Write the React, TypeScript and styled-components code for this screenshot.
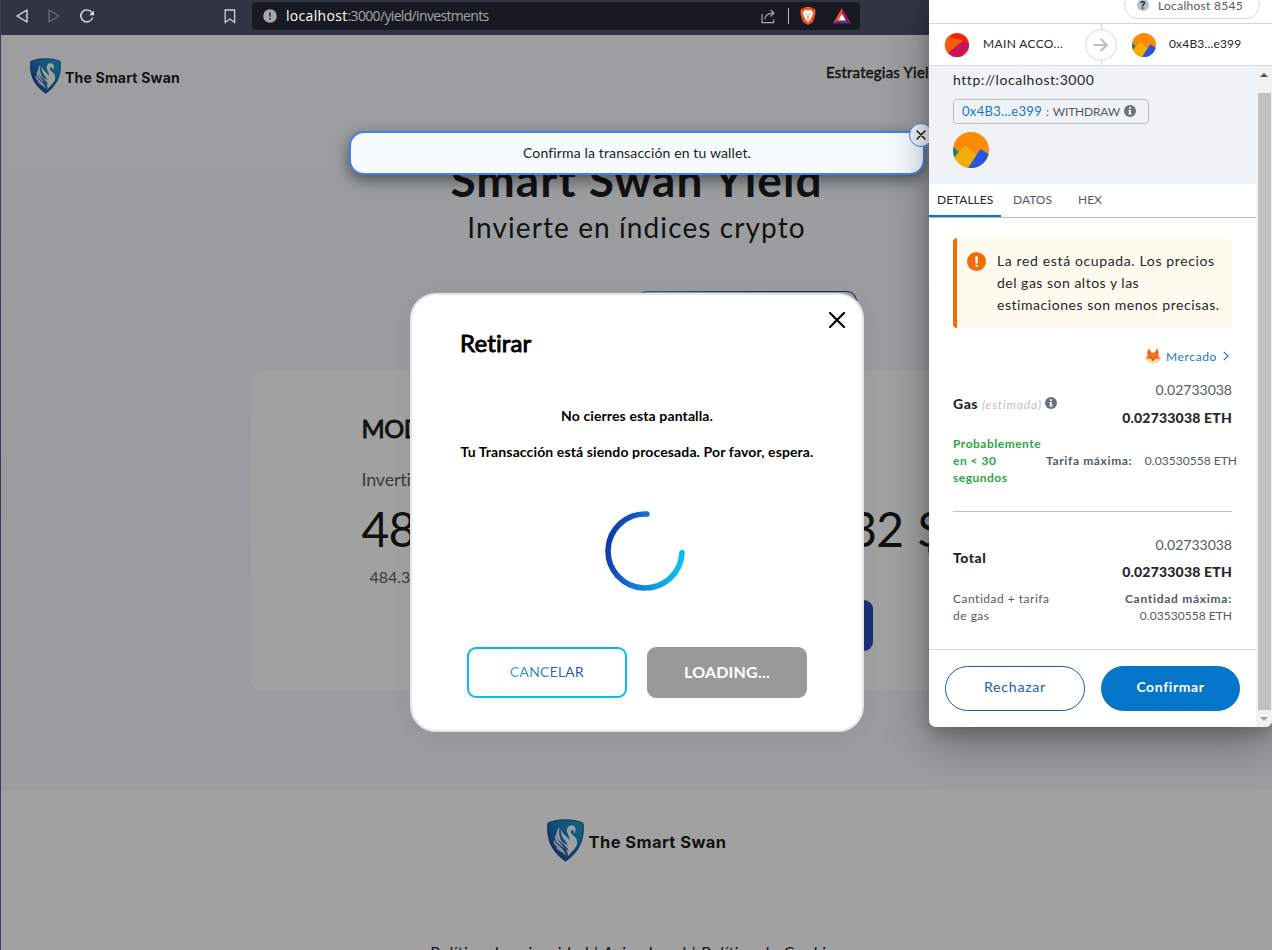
import React from 'react';
import styled, { createGlobalStyle } from 'styled-components';

const GlobalStyle = createGlobalStyle`
  *, *::before, *::after { box-sizing: border-box; }
  body { margin: 0; font-family: Lato, sans-serif; color: #1b1b1b; }
  svg { display: block; flex: none; }
  button { font: inherit; padding: 0; cursor: pointer; }
`;

const Screen = styled.div`
  position: relative;
  width: 1272px;
  height: 950px;
  overflow: hidden;
  display: flex;
  flex-direction: column;
  border-left: 1px solid #4a3558;
  background: #fff;
`;

/* ---------- browser toolbar ---------- */

const Toolbar = styled.div`
  flex: none;
  height: 35px;
  padding: 0 0 3px 15px;
  display: flex;
  align-items: center;
  background: #313443;
`;

const NavIcons = styled.div`
  display: flex;
  align-items: center;
  gap: 20px;
  width: 208px;
`;

const AddressBar = styled.div`
  width: 608px;
  height: 28px;
  margin-left: 16px;
  padding: 0 9px 0 11px;
  display: flex;
  align-items: center;
  border-radius: 4px;
  background: #171a22;
  font: 14px/28px 'Open Sans', sans-serif;
`;

const UrlHost = styled.span`
  margin-left: 9px;
  color: #fff;
  letter-spacing: 0.32px;
`;

const UrlPath = styled.span`
  flex: 1;
  color: #a3a5ad;
  letter-spacing: -0.66px;
`;

const AddressDivider = styled.i`
  width: 1px;
  height: 16px;
  margin: 0 11px 0 12px;
  background: #b9bac0;
`;

const Spacer = styled.i`
  width: 17px;
`;

/* ---------- site ---------- */

const Site = styled.div`
  position: relative;
  flex: 1;
  min-height: 0;
  overflow: hidden;
`;

const Hero = styled.section`
  height: 755px;
  display: flex;
  flex-direction: column;
  align-items: center;
  background: linear-gradient(180deg, #fafbfe 0%, #f8f9fc 25%, #f3f6fa 60%, #f8f9fc 100%);
`;

const SiteHeader = styled.header`
  align-self: stretch;
  height: 83px;
  padding: 0 0 1px 29px;
  display: flex;
  align-items: center;
`;

const Brand = styled.div<{ $large?: boolean }>`
  display: flex;
  align-items: center;
  gap: ${(p) => (p.$large ? 5 : 4)}px;
  width: ${(p) => (p.$large ? 'auto' : '796px')};
  font: 700 ${(p) => (p.$large ? 16.5 : 14)}px/20px Inter, sans-serif;
  letter-spacing: ${(p) => (p.$large ? 0.42 : 0.2)}px;
  color: #1c1c1e;
`;

const BrandName = styled.span`
  padding-top: 3px;
`;

const NavLink = styled.a`
  margin-top: -8px;
  font-size: 15px;
  letter-spacing: 0.21px;
  color: #222;
  -webkit-text-stroke: 0.45px #222;
`;

const HeroTitle = styled.h1`
  margin: 37px 0 0;
  height: 50px;
  font: 700 46px/50px Lato, sans-serif;
  letter-spacing: 1.05px;
  color: #1d1d1d;
`;

const HeroSubtitle = styled.p`
  margin: 2px 0 0;
  height: 40px;
  font: 400 28px/40px Lato, sans-serif;
  letter-spacing: 1.1px;
  color: #1d1d1d;
`;

const RangeButton = styled.div`
  width: 220px;
  height: 44px;
  margin: 44px 0 0 221px;
  border: 1px solid transparent;
  border-radius: 10px;
  background:
    linear-gradient(#f9fafd, #f9fafd) padding-box,
    linear-gradient(90deg, #23a8d8, #2444b4 60%) border-box;
`;

const StrategyCard = styled.article`
  width: 772px;
  height: 320px;
  margin-top: 36px;
  padding: 41px 150px 40px 111px;
  border-radius: 10px;
  background: #fff;
  display: grid;
  grid-template-columns: 396px minmax(0, 1fr);
  align-content: start;
`;

const CardTitle = styled.h2`
  grid-column: 1 / -1;
  margin: 0;
  font: 400 25px/32px Lato, sans-serif;
  letter-spacing: -0.5px;
  color: #1d1d1d;
  -webkit-text-stroke: 0.9px #1d1d1d;
`;

const CardLabel = styled.span`
  margin-top: 24px;
  height: 22px;
  font-size: 18px;
  line-height: 22px;
  letter-spacing: -0.2px;
  color: #606060;
`;

const CardAmount = styled.strong`
  margin-top: 10px;
  height: 58px;
  font-size: 48px;
  font-weight: 400;
  line-height: 58px;
  letter-spacing: -0.8px;
  word-spacing: 2px;
  white-space: nowrap;
  color: #1a1a1a;
`;

const CardUnits = styled.span`
  margin: 9px 0 0 8px;
  height: 20px;
  font-size: 16px;
  line-height: 20px;
  color: #606060;
`;

const CardAction = styled.div`
  grid-column: 1 / -1;
  justify-self: end;
  width: 160px;
  height: 51px;
  margin-top: 13px;
  border-radius: 9px;
  background: linear-gradient(90deg, #1fb0e0, #2c4bbb 80%);
`;

const SiteFooter = styled.footer`
  display: flex;
  flex-direction: column;
  align-items: center;
  padding-top: 29px;
  background: #fff;
`;

const FooterLinks = styled.p`
  margin: 78px 0 0;
  font-size: 16px;
  line-height: 24px;
  letter-spacing: 0.4px;
  word-spacing: 0.6px;
  white-space: nowrap;
  color: #1d1d1d;
`;

const Backdrop = styled.div`
  position: absolute;
  inset: 0;
  background: rgba(0, 0, 0, 0.37);
`;

/* ---------- toast ---------- */

const Toast = styled.div`
  position: absolute;
  left: 348px;
  top: 131px;
  width: 576px;
  height: 44px;
  padding-bottom: 1px;
  display: flex;
  align-items: center;
  justify-content: center;
  border: 2px solid #3f82ee;
  border-radius: 15px;
  background: #f5fbff;
  box-shadow: 0 5px 15px rgba(0, 0, 0, 0.5);
  font-size: 14px;
  letter-spacing: 0.14px;
  color: #222;
`;

const ToastClose = styled.button`
  position: absolute;
  right: -10px;
  top: -10px;
  width: 24px;
  height: 24px;
  display: grid;
  place-items: center;
  border: 1px solid #3f82ee;
  border-radius: 50%;
  background: #f2f7ff;
`;

/* ---------- modal ---------- */

const Modal = styled.div`
  position: absolute;
  left: 409px;
  top: 293px;
  width: 454px;
  height: 439px;
  padding: 33px 48px 0;
  display: flex;
  flex-direction: column;
  border: 2px solid #e3e5ea;
  border-radius: 26px;
  background: #fff;
  box-shadow: 0 4px 20px rgba(0, 0, 0, 0.06);
  color: #000;
`;

const ModalClose = styled.button`
  position: absolute;
  right: 17px;
  top: 17px;
  border: 0;
  background: none;
`;

const ModalTitle = styled.h2`
  margin: 0;
  font: 400 24px/30px Lato, sans-serif;
  letter-spacing: 0.15px;
  -webkit-text-stroke: 0.9px #000;
`;

const ModalText = styled.p<{ $gap: number }>`
  margin: ${(p) => p.$gap}px 0 0;
  font-size: 14px;
  font-weight: 700;
  line-height: 18px;
  letter-spacing: 0.12px;
  text-align: center;
  white-space: nowrap;
`;

const SpinnerBox = styled.div`
  margin: 50px 0 0 145px;
`;

const ModalActions = styled.div`
  display: flex;
  justify-content: center;
  gap: 20px;
  margin-top: 56px;
`;

const ModalButton = styled.button<{ $muted?: boolean }>`
  width: 160px;
  height: 51px;
  padding-bottom: 2px;
  border: ${(p) => (p.$muted ? 0 : '2px solid #0bbce9')};
  border-radius: 9px;
  background: ${(p) => (p.$muted ? '#999' : '#fff')};
  color: #fff;
  font-size: ${(p) => (p.$muted ? 16 : 14)}px;
  font-weight: ${(p) => (p.$muted ? 700 : 400)};
  letter-spacing: 0.2px;
`;

const GradientLabel = styled.span`
  background: linear-gradient(90deg, #2aa0dd, #1b48b4);
  -webkit-background-clip: text;
  background-clip: text;
  color: transparent;
`;

/* ---------- wallet popup ---------- */

const Wallet = styled.aside`
  position: absolute;
  right: 0;
  top: 0;
  width: 343px;
  height: 727px;
  display: flex;
  flex-direction: column;
  overflow: hidden;
  border-radius: 0 0 7px 7px;
  background: #fff;
  font-size: 12px;
  color: #24272a;
`;

const WalletShadow = styled.div`
  position: absolute;
  right: 0;
  top: 0;
  width: 343px;
  height: 727px;
  border-radius: 0 0 7px 7px;
  box-shadow: 0 6px 14px rgba(0, 0, 0, 0.14), 0 14px 44px rgba(0, 0, 0, 0.36);
`;

const NetworkBar = styled.div`
  flex: none;
  height: 24px;
  padding: 0 12px 4px 0;
  display: flex;
  justify-content: flex-end;
  align-items: flex-end;
  border-bottom: 1px solid #d6d9dc;
`;

const NetworkPill = styled.div`
  flex: none;
  width: 136px;
  height: 28px;
  padding: 0 0 0 12px;
  display: flex;
  align-items: center;
  gap: 9px;
  border: 1px solid #d6d9dc;
  border-radius: 14px;
  color: #535a61;
  letter-spacing: 0.29px;
`;

const Bullet = styled.span`
  width: 12px;
  height: 12px;
  border-radius: 50%;
  background: #bbc0c5;
  color: #24272a;
  font: 700 10px/12px Inter, sans-serif;
  text-align: center;
`;

const AccountsBar = styled.div`
  flex: none;
  height: 42px;
  display: grid;
  grid-template-columns: 38px 102px 32px 15px 37px 1fr;
  align-items: center;
  padding-left: 16px;
  border-bottom: 1px solid #d6d9dc;
`;

const AccountName = styled.span<{ $spacing: number }>`
  padding-bottom: 2px;
  letter-spacing: ${(p) => p.$spacing}px;
  white-space: nowrap;
`;

const ArrowColumn = styled.div`
  align-self: stretch;
  display: flex;
  flex-direction: column;
  align-items: center;
  background: linear-gradient(#d6d9dc, #d6d9dc) center / 1px 100% no-repeat;
  padding-top: 5px;
`;

const ArrowCircle = styled.div`
  width: 32px;
  height: 32px;
  flex: none;
  display: grid;
  place-items: center;
  border: 1px solid #d6d9dc;
  border-radius: 50%;
  background: #fff;
`;

const WalletBody = styled.div`
  flex: 1;
  min-height: 0;
  display: flex;
`;

const WalletContent = styled.div`
  width: 327px;
  display: flex;
  flex-direction: column;
`;

const Scrollbar = styled.div`
  width: 16px;
  display: grid;
  grid-template-rows: 27px 1fr 17px;
  justify-items: center;
  background: #f1f1f1;
`;

const ScrollArrow = styled.div<{ $down?: boolean }>`
  align-self: ${(p) => (p.$down ? 'center' : 'start')};
  margin-top: ${(p) => (p.$down ? 0 : 7)}px;
  border: 4px solid transparent;
  border-top-width: ${(p) => (p.$down ? 4 : 0)}px;
  border-bottom-width: ${(p) => (p.$down ? 0 : 4)}px;
  border-${(p) => (p.$down ? 'top' : 'bottom')}-color: ${(p) => (p.$down ? '#a0a0a0' : '#505050')};
`;

const ScrollThumb = styled.div`
  width: 13px;
  background: #c1c1c1;
  margin-left: 1px;
`;

const Summary = styled.div`
  flex: none;
  height: 118px;
  padding: 4px 24px 0;
  background: #eff3f6;
`;

const Origin = styled.div`
  font-size: 14px;
  line-height: 20px;
  letter-spacing: 0.56px;
`;

const MethodChip = styled.div`
  width: 196px;
  height: 25px;
  margin: 9px 0 8px;
  padding: 0 0 1px 8px;
  display: flex;
  align-items: center;
  border: 1px solid #bbc0c5;
  border-radius: 4px;
  color: #535a61;
  letter-spacing: -0.2px;
`;

const AddressLink = styled.span`
  margin-right: 4px;
  font-size: 13px;
  letter-spacing: 0.32px;
  color: #1277cc;
`;

const MethodName = styled.span`
  margin: 0 4px;
`;

const Tabs = styled.div`
  flex: none;
  height: 34px;
  display: flex;
  gap: 4px;
  border-bottom: 1px solid #bbc0c5;
`;

const Tab = styled.div<{ $active?: boolean; $width: number }>`
  width: ${(p) => p.$width}px;
  height: 33px;
  padding: 8px 0 0 8px;
  line-height: 16px;
  color: ${(p) => (p.$active ? '#24272a' : '#535a61')};
  border-bottom: ${(p) => (p.$active ? '2px solid #0376c9' : '0')};
`;

const Alert = styled.div`
  flex: none;
  width: 279px;
  height: 90px;
  margin: 20px 0 0 24px;
  padding: 12px 0 0 10px;
  display: flex;
  gap: 11px;
  border-left: 4px solid #f66a0a;
  border-radius: 4px;
  background: #fefaee;
`;

const AlertMark = styled.span`
  width: 19px;
  height: 19px;
  margin-top: 2px;
  border-radius: 50%;
  background: #f66a0a;
  color: #fff;
  font: 700 14px/19px Inter, sans-serif;
  text-align: center;
`;

const AlertText = styled.p`
  margin: 0;
  font-size: 14px;
  line-height: 22px;
`;

const AlertLine = styled.span<{ $spacing: number }>`
  display: block;
  letter-spacing: ${(p) => p.$spacing}px;
  white-space: nowrap;
`;

const GasSource = styled.div`
  height: 16px;
  margin: 20px 27px 0 0;
  display: flex;
  align-items: center;
  justify-content: flex-end;
  color: #1277cc;
  letter-spacing: 0.62px;
`;

const GasSourceName = styled.span`
  margin: 0 6px 0 5px;
`;

const FeeBlock = styled.section<{ $gap: number; $height: number }>`
  height: ${(p) => p.$height}px;
  margin: ${(p) => p.$gap}px 24px 0;
`;

const FeeHead = styled.div`
  display: flex;
  align-items: center;
  justify-content: space-between;
`;

const FeeName = styled.div`
  display: flex;
  align-items: baseline;
  margin-top: -2px;
  font-size: 14px;
  font-weight: 900;
  letter-spacing: 0.5px;
`;

const FeeHint = styled.em`
  margin: 0 3px 0 4px;
  font-size: 12px;
  font-weight: 400;
  letter-spacing: 0.85px;
  color: #bbc0c5;
`;

const InfoSlot = styled.span`
  align-self: center;
`;

const FeeAmounts = styled.div<{ $step: number }>`
  text-align: right;
  font-size: 14px;
  line-height: ${(p) => p.$step}px;
  color: #535a61;
`;

const FeeTotal = styled.strong`
  display: block;
  font-weight: 900;
  letter-spacing: 0.2px;
  color: #24272a;
`;

const FeeFoot = styled.div<{ $gap: number }>`
  display: flex;
  align-items: center;
  justify-content: space-between;
  margin-top: ${(p) => p.$gap}px;
  line-height: 17px;
  letter-spacing: 0.5px;
  color: #535a61;
  white-space: nowrap;
`;

const FeeTiming = styled.strong`
  width: 93px;
  color: #28a745;
  line-height: 17px;
  white-space: pre-line;
`;

const MaxFee = styled.div`
  flex: 1;
  display: flex;
  justify-content: space-between;
  margin-right: -5px;
`;

const MaxLabel = styled.strong<{ $wide?: boolean }>`
  letter-spacing: ${(p) => (p.$wide ? 0.72 : 0.63)}px;
`;

const MaxValue = styled.span`
  letter-spacing: 0.03px;
`;

const Stack = styled.div<{ $right?: boolean }>`
  display: flex;
  flex-direction: column;
  align-items: ${(p) => (p.$right ? 'flex-end' : 'flex-start')};
`;

const Divider = styled.hr`
  width: 279px;
  margin: 0 0 0 24px;
  border: 0;
  border-top: 1px solid #bbc0c5;
`;

const WalletActions = styled.div`
  margin-top: auto;
  height: 78px;
  padding: 16px;
  display: grid;
  grid-template-columns: 140px 139px;
  gap: 16px;
  border-top: 1px solid #d6d9dc;
`;

const WalletButton = styled.button<{ $primary?: boolean }>`
  height: 45px;
  padding-bottom: 4px;
  border: 1px solid ${(p) => (p.$primary ? '#0376c9' : '#1660a8')};
  border-radius: 23px;
  background: ${(p) => (p.$primary ? '#0376c9' : '#fff')};
  color: ${(p) => (p.$primary ? '#fff' : '#1660a8')};
  font-size: 14px;
  font-weight: ${(p) => (p.$primary ? 700 : 400)};
  letter-spacing: ${(p) => (p.$primary ? 0.6 : 0.81)}px;
`;

/* ---------- drawings ---------- */

function SwanShield({ width, height, id }: { width: number; height: number; id: string }) {
  return (
    <svg width={width} height={height} viewBox="0 0 37 43">
      <defs>
        <linearGradient id={id} x1="0.85" y1="0.1" x2="0.15" y2="0.8">
          <stop offset="0" stopColor="#1f9dc8" />
          <stop offset="0.45" stopColor="#1d7fc0" />
          <stop offset="1" stopColor="#2846a4" />
        </linearGradient>
      </defs>
      <path d="M18.5 0.3C25 0.3 31 1.2 35.4 3.3C36.4 3.8 36.8 4.6 36.8 5.8C37.2 20 34.5 31 18.7 42.7C2.5 31 -0.1 20 0.2 5.8C0.2 4.6 0.6 3.8 1.6 3.3C6 1.2 12 0.3 18.5 0.3Z" fill={`url(#${id})`} />
      <path d="M0.9 5.8C0.9 4.8 1.2 4.3 2 3.9C6.5 1.8 12 1 18.5 1C25 1 30.5 1.8 35 3.9C35.8 4.3 36.1 4.8 36.1 5.8C36.5 20 33.5 30.8 18.7 41.8C3.5 30.8 0.5 20 0.9 5.8Z" fill="none" stroke="#233a8c" strokeWidth="1" opacity="0.7" />
      <path d="M20.3 13.5C19.2 9.5 21.2 6.4 24.2 6.4C26.8 6.4 28.8 8 28.6 10.2C28.5 11.6 27.9 13.1 27.9 14.6C26.9 13.9 27.1 12 25.9 11.2C24.6 10.5 23.3 11.8 23.7 13.5C24.3 16.2 30.1 17.6 30.1 23C30.1 29.5 24.8 31.5 20.8 37.6C21.2 34.6 20.6 32.5 18.4 30.3C20.2 30.8 21.2 31.8 21.7 33C21.7 28.5 17.5 27.5 14.6 22.5C17 24.4 19.2 25.2 20.9 26.9C19.8 22 12.5 18.5 14.3 10.3C15.3 15.5 20.6 18 22.7 21.4C23.2 18.5 21.1 16.6 20.3 13.5Z" fill="#fff" />
      <path d="M12.2 9C7.8 14.5 10.2 19.7 15.2 24.1C12.8 19.5 10.8 15.5 12.2 9ZM9.4 15.5C6.3 20.3 10.5 24.2 16.4 28.4C12.8 24.2 9.3 20.6 9.4 15.5ZM7.2 21.3C6.3 26.6 12 28.2 17.4 33.6C14.8 27.8 8.8 26.6 7.2 21.3ZM9.6 28.3C10.5 31.5 15.2 31.6 18.7 36.2C17.6 32.2 12.8 31.4 9.6 28.3Z" fill="#fff" stroke="#fff" strokeWidth="0.5" />
    </svg>
  );
}

function Cross({ size, weight }: { size: number; weight: number }) {
  return (
    <svg width={size} height={size} viewBox={`0 0 ${size} ${size}`} stroke="#000" strokeWidth={weight} strokeLinecap="round">
      <path d={`M1 1L${size - 1} ${size - 1}M${size - 1} 1L1 ${size - 1}`} />
    </svg>
  );
}

function InfoDot({ size }: { size: number }) {
  return (
    <svg width={size} height={size} viewBox="0 0 12 12">
      <circle cx="6" cy="6" r="6" fill="#6a737d" />
      <rect x="5.1" y="2.2" width="1.8" height="1.8" fill="#fff" />
      <path d="M4.4 5H6.9V8.4H7.7V9.6H4.3V8.4H5.1V6.2H4.4Z" fill="#fff" />
    </svg>
  );
}

function ContractAvatar({ size, id }: { size: number; id: string }) {
  return (
    <svg width={size} height={size} viewBox="0 0 36 36">
      <clipPath id={id}><circle cx="18" cy="18" r="18" /></clipPath>
      <g clipPath={`url(#${id})`}>
        <rect width="36" height="36" fill="#fb8a05" />
        <path d="M0 15L5.8 20L1 26H0Z" fill="#0b8289" />
        <path d="M12 13.5L24 23.5L16 36H0V27Z" fill="#f3ae04" />
        <path d="M27.5 17L37 23V36H15Z" fill="#2457e1" />
      </g>
    </svg>
  );
}

function MainAvatar() {
  return (
    <svg width="24" height="24" viewBox="0 0 24 24">
      <clipPath id="main-avatar"><circle cx="12" cy="12" r="12" /></clipPath>
      <g clipPath="url(#main-avatar)">
        <rect width="24" height="24" fill="#fb1f04" />
        <path d="M0 4L4 3L18 8L3 20L0 20Z" fill="#fb5b04" />
        <path d="M18 8L24 11V24H5L3 20Z" fill="#c8145d" />
        <path d="M24 15.5L16 24H24Z" fill="#f4760a" />
      </g>
    </svg>
  );
}

function FoxFace() {
  return (
    <svg width="16" height="16" viewBox="0 0 16 16">
      <path d="M3.2 0.8C4.4 1 5.6 2.6 6.1 4.4H9.9C10.4 2.6 11.6 1 12.8 0.8C13.6 3.4 13.9 6 13.5 8L15.6 10.4C13.5 13.2 11 15.2 8 15.2C5 15.2 2.5 13.2 0.4 10.4L2.5 8C2.1 6 2.4 3.4 3.2 0.8Z" fill="#f4741c" />
      <path d="M3.7 2.6C4.5 3.2 5 4.2 5.1 5.2L3.6 6.2ZM12.3 2.6C11.5 3.2 11 4.2 10.9 5.2L12.4 6.2Z" fill="#c4501c" />
      <path d="M0.4 10.8C3 10.2 5.8 10.6 8 12.8C10.2 10.6 13 10.2 15.6 10.8C13.5 13.6 11 15.5 8 15.5C5 15.5 2.5 13.6 0.4 10.8Z" fill="#fbd9a0" />
      <path d="M4.8 8.4L6.4 9.2L5.2 9.7ZM11.2 8.4L9.6 9.2L10.8 9.7ZM6.8 11.4H9.2L8 13Z" fill="#5b3020" />
    </svg>
  );
}

function BraveLion() {
  return (
    <svg width="16" height="18" viewBox="0 0 16 18">
      <path d="M5 0H11L12.6 1.7L14.2 1.5L15.8 3.8L15.2 5.3L15.6 6.6L13.5 13.6C13.2 14.6 12.6 15.2 11.8 15.7L8 18L4.2 15.7C3.4 15.2 2.8 14.6 2.5 13.6L0.4 6.6L0.8 5.3L0.2 3.8L1.8 1.5L3.4 1.7Z" fill="#f8501e" />
      <path d="M5 2.9L8 3.3L11 2.9L13.5 6L12.3 7.8L12.6 9.1L10.7 10.8L11.2 12L8 15L4.8 12L5.3 10.8L3.4 9.1L3.7 7.8L2.5 6Z" fill="#fff" />
      <path d="M4.6 6.2L7 6.9L6.6 8.1ZM11.4 6.2L9 6.9L9.4 8.1ZM7.3 8.6H8.7L8.9 10.2L8 10.8L7.1 10.2ZM5.9 11.3L8 12L10.1 11.3L8 12.9Z" fill="#f8501e" />
    </svg>
  );
}

function AttentionTriangle() {
  return (
    <svg width="18" height="16" viewBox="0 0 18 16">
      <path d="M9 0L0 15.6L5.4 12.4L9 6Z" fill="#f9502c" />
      <path d="M9 0L18 15.6L12.6 12.4L9 6Z" fill="#9b1b63" />
      <path d="M0 15.6H18L12.6 12.4H5.4Z" fill="#5d2d91" />
      <path d="M9 5.8L12.8 12.5H5.2Z" fill="#fff" />
    </svg>
  );
}

function Spinner() {
  return (
    <svg width="80" height="80" viewBox="0 0 80 80">
      <defs>
        <linearGradient id="spin" x1="0" y1="0.35" x2="1" y2="0.6">
          <stop offset="0" stopColor="#0c3ab0" />
          <stop offset="0.5" stopColor="#1779d3" />
          <stop offset="1" stopColor="#05c0f0" />
        </linearGradient>
      </defs>
      <path d="M41.8 3.05A37 37 0 1 0 77 41.8" fill="none" stroke="url(#spin)" strokeWidth="5.6" strokeLinecap="round" />
    </svg>
  );
}

/* ---------- page ---------- */

function BrowserToolbar() {
  return (
    <Toolbar>
      <NavIcons>
        <svg width="12" height="14" viewBox="0 0 12 14" fill="none" stroke="#e4e5e9" strokeWidth="1.3" strokeLinejoin="round"><path d="M1 7L11 1V13Z" /></svg>
        <svg width="12" height="14" viewBox="0 0 12 14" fill="none" stroke="#696b78" strokeWidth="1.2" strokeLinejoin="round"><path d="M11 7L1 1V13Z" /></svg>
        <svg width="15" height="14" viewBox="0 0 15 14" fill="none" stroke="#e4e5e9" strokeWidth="1.4"><path d="M12.6 8.6A6 6 0 1 1 11.6 3.2" /><path d="M9.2 6.2H14V1.6Z" fill="#e4e5e9" stroke="none" /></svg>
      </NavIcons>
      <svg width="12" height="15" viewBox="0 0 12 15" fill="none" stroke="#d0d1d7" strokeWidth="1.3"><path d="M1.2 1H10.6V13.5L5.9 10L1.2 13.5Z" /></svg>
      <AddressBar>
        <svg width="14" height="14" viewBox="0 0 14 14"><circle cx="7" cy="7" r="6.8" fill="#a6a8b0" /><path d="M6.1 3.2H7.9V7.8H6.1ZM6.1 9H7.9V10.8H6.1Z" fill="#3c3e48" /></svg>
        <UrlHost>localhost</UrlHost>
        <UrlPath>:3000/yield/investments</UrlPath>
        <svg width="15" height="15" viewBox="0 0 15 15" fill="none" stroke="#a6a8b0" strokeWidth="1.2"><path d="M1 5V13.6H12.6V10.5M3.6 10.5C4 6.6 6.6 4.4 12.6 4.2M9.6 1L13 4.2L9.6 7.4" /></svg>
        <AddressDivider />
        <BraveLion />
        <Spacer />
        <AttentionTriangle />
      </AddressBar>
    </Toolbar>
  );
}

function InvestmentsPage() {
  return (
    <Site>
      <Hero>
        <SiteHeader>
          <Brand>
            <SwanShield width={31} height={36} id="shield-header" />
            <BrandName>The Smart Swan</BrandName>
          </Brand>
          <NavLink>Estrategias Yield</NavLink>
        </SiteHeader>
        <HeroTitle>Smart Swan Yield</HeroTitle>
        <HeroSubtitle>Invierte en índices crypto</HeroSubtitle>
        <RangeButton />
        <StrategyCard>
          <CardTitle>MODERADO</CardTitle>
          <CardLabel>Invertido</CardLabel>
          <CardLabel />
          <CardAmount>484.32 $</CardAmount>
          <CardAmount>484.32 $</CardAmount>
          <CardUnits>484.32</CardUnits>
          <CardUnits />
          <CardAction />
        </StrategyCard>
      </Hero>
      <SiteFooter>
        <Brand $large>
          <SwanShield width={37} height={43} id="shield-footer" />
          <BrandName>The Smart Swan</BrandName>
        </Brand>
        <FooterLinks>Política de privacidad | Aviso Legal | Política de Cookies</FooterLinks>
      </SiteFooter>
      <Backdrop />
    </Site>
  );
}

function WithdrawModal() {
  return (
    <Modal>
      <ModalClose aria-label="Cerrar"><Cross size={16} weight={2.1} /></ModalClose>
      <ModalTitle>Retirar</ModalTitle>
      <ModalText $gap={49}>No cierres esta pantalla.</ModalText>
      <ModalText $gap={18}>Tu Transacción está siendo procesada. Por favor, espera.</ModalText>
      <SpinnerBox><Spinner /></SpinnerBox>
      <ModalActions>
        <ModalButton><GradientLabel>CANCELAR</GradientLabel></ModalButton>
        <ModalButton $muted>LOADING...</ModalButton>
      </ModalActions>
    </Modal>
  );
}

function WalletPopup() {
  return (
    <Wallet>
      <NetworkBar>
        <NetworkPill><Bullet>?</Bullet>Localhost 8545</NetworkPill>
      </NetworkBar>
      <AccountsBar>
        <MainAvatar />
        <AccountName $spacing={0.35}>MAIN ACCO...</AccountName>
        <ArrowColumn>
          <ArrowCircle>
            <svg width="16" height="14" viewBox="0 0 16 14" fill="none" stroke="#bbc0c5" strokeWidth="2.2"><path d="M0.5 7H13.5M7.8 1L13.8 7L7.8 13" /></svg>
          </ArrowCircle>
        </ArrowColumn>
        <span />
        <ContractAvatar size={24} id="contract-small" />
        <AccountName $spacing={0.16}>0x4B3...e399</AccountName>
      </AccountsBar>
      <WalletBody>
        <WalletContent>
          <Summary>
            <Origin>http://localhost:3000</Origin>
            <MethodChip>
              <AddressLink>0x4B3...e399</AddressLink>:
              <MethodName>WITHDRAW</MethodName>
              <InfoDot size={12} />
            </MethodChip>
            <ContractAvatar size={36} id="contract-large" />
          </Summary>
          <Tabs>
            <Tab $active $width={72}>DETALLES</Tab>
            <Tab $width={61}>DATOS</Tab>
            <Tab $width={60}>HEX</Tab>
          </Tabs>
          <Alert>
            <AlertMark>!</AlertMark>
            <AlertText>
              <AlertLine $spacing={0.63}>La red está ocupada. Los precios</AlertLine>
              <AlertLine $spacing={0.5}>del gas son altos y las</AlertLine>
              <AlertLine $spacing={0.54}>estimaciones son menos precisas.</AlertLine>
            </AlertText>
          </Alert>
          <GasSource>
            <FoxFace />
            <GasSourceName>Mercado</GasSourceName>
            <svg width="6" height="10" viewBox="0 0 6 10" fill="none" stroke="#1277cc" strokeWidth="1.2"><path d="M0.8 0.8L5 5L0.8 9.2" /></svg>
          </GasSource>
          <FeeBlock $gap={12} $height={135}>
            <FeeHead>
              <FeeName>Gas<FeeHint>(estimada)</FeeHint><InfoSlot><InfoDot size={12} /></InfoSlot></FeeName>
              <FeeAmounts $step={28}>0.02733038<FeeTotal>0.02733038 ETH</FeeTotal></FeeAmounts>
            </FeeHead>
            <FeeFoot $gap={3}>
              <FeeTiming>{'Probablemente\nen < 30\nsegundos'}</FeeTiming>
              <MaxFee><MaxLabel>Tarifa máxima:</MaxLabel><MaxValue>0.03530558 ETH</MaxValue></MaxFee>
            </FeeFoot>
          </FeeBlock>
          <Divider />
          <FeeBlock $gap={19} $height={95}>
            <FeeHead>
              <FeeName>Total</FeeName>
              <FeeAmounts $step={27}>0.02733038<FeeTotal>0.02733038 ETH</FeeTotal></FeeAmounts>
            </FeeHead>
            <FeeFoot $gap={5}>
              <Stack><span>Cantidad + tarifa</span><span>de gas</span></Stack>
              <Stack $right><MaxLabel $wide>Cantidad máxima:</MaxLabel><MaxValue>0.03530558 ETH</MaxValue></Stack>
            </FeeFoot>
          </FeeBlock>
          <WalletActions>
            <WalletButton>Rechazar</WalletButton>
            <WalletButton $primary>Confirmar</WalletButton>
          </WalletActions>
        </WalletContent>
        <Scrollbar>
          <ScrollArrow />
          <ScrollThumb />
          <ScrollArrow $down />
        </Scrollbar>
      </WalletBody>
    </Wallet>
  );
}

export default function App() {
  return (
    <>
      <GlobalStyle />
      <Screen>
        <BrowserToolbar />
        <InvestmentsPage />
        <WithdrawModal />
        <Toast>
          Confirma la transacción en tu wallet.
          <ToastClose aria-label="Cerrar"><Cross size={10} weight={1.3} /></ToastClose>
        </Toast>
        <WalletShadow />
        <WalletPopup />
      </Screen>
    </>
  );
}
